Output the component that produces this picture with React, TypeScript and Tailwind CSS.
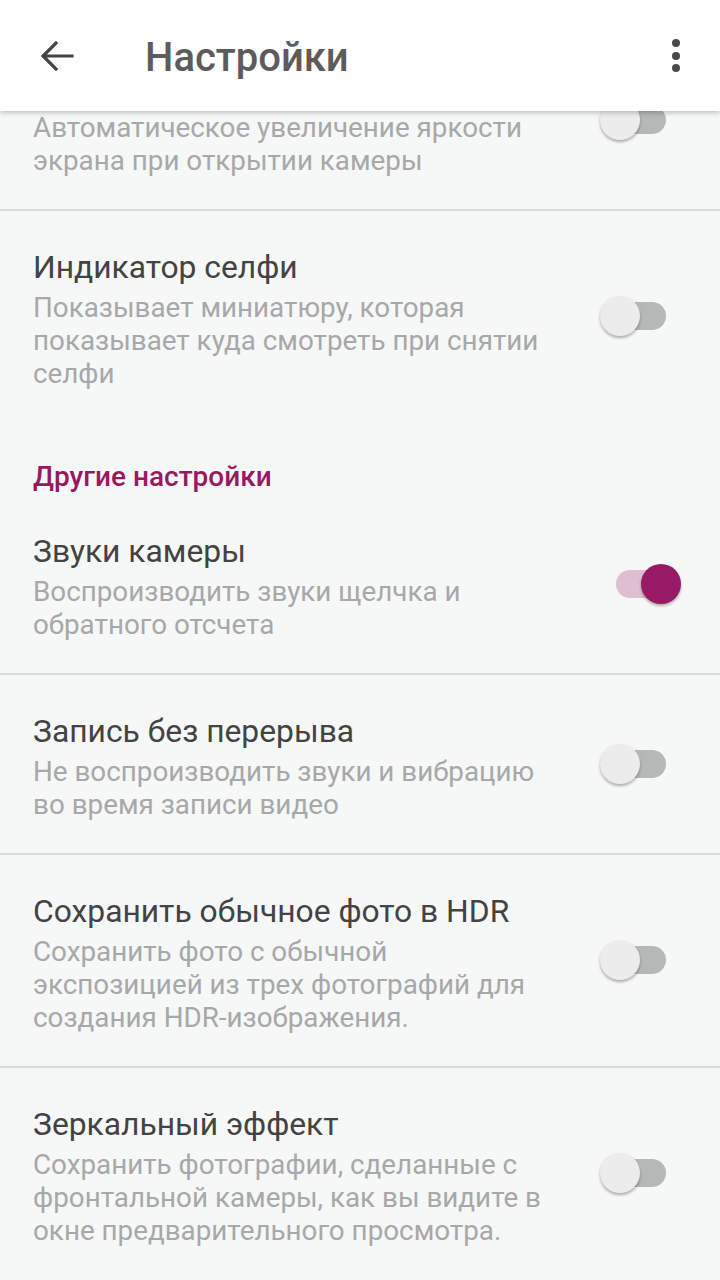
import React from 'react';

type Item = {
  title?: string;
  summary: string[];
  on?: boolean;
  divider?: boolean;
};

const Toggle: React.FC<{ on?: boolean }> = ({ on }) => (
  <div className="relative w-[82px] h-[40px] shrink-0 -mt-[5px]">
    <div className={`absolute left-[16px] top-[6px] w-[50px] h-[28px] rounded-full ${on ? 'bg-[#dfbdd2]' : 'bg-[#b6b8b7]'}`} />
    <div
      className={`absolute top-0 w-[40px] h-[40px] rounded-full shadow-[0_2px_3px_rgba(0,0,0,0.3)] ${on ? 'left-[41px] bg-[#981a64]' : 'left-0 bg-[#ececec]'}`}
    />
  </div>
);

const Row: React.FC<{ item: Item }> = ({ item }) => (
  <>
    <div className="flex items-center pl-[33px] pr-[38px] pt-[36px] pb-[32px]">
      <div className="flex-1 min-w-0">
        <div className="h-[40px] text-[31.8px] leading-[40px] text-[#434343]">{item.title}</div>
        <div className="mt-[4px] text-[27.8px] leading-[33px] text-[#a7a8a9]">
          {item.summary.map(s => (
            <div key={s} className="whitespace-nowrap">{s}</div>
          ))}
        </div>
      </div>
      <Toggle on={item.on} />
    </div>
    {item.divider && <div className="h-[2px] bg-[#d9dada]" />}
  </>
);

const camera: Item[] = [
  {
    summary: ['Автоматическое увеличение яркости', 'экрана при открытии камеры'],
    divider: true,
  },
  {
    title: 'Индикатор селфи',
    summary: ['Показывает миниатюру, которая', 'показывает куда смотреть при снятии', 'селфи'],
  },
];

const other: Item[] = [
  {
    title: 'Звуки камеры',
    summary: ['Воспроизводить звуки щелчка и', 'обратного отсчета'],
    on: true,
    divider: true,
  },
  {
    title: 'Запись без перерыва',
    summary: ['Не воспроизводить звуки и вибрацию', 'во время записи видео'],
    divider: true,
  },
  {
    title: 'Сохранить обычное фото в HDR',
    summary: ['Сохранить фото с обычной', 'экспозицией из трех фотографий для', 'создания HDR-изображения.'],
    divider: true,
  },
  {
    title: 'Зеркальный эффект',
    summary: ['Сохранить фотографии, сделанные с', 'фронтальной камеры, как вы видите в', 'окне предварительного просмотра.'],
  },
];

export default function App() {
  return (
    <div className="w-[720px] h-[1280px] overflow-hidden bg-[#f6f7f7] flex flex-col font-['Roboto',sans-serif]">
      <header className="relative z-10 h-[111px] shrink-0 bg-white flex items-center shadow-[0_2px_5px_rgba(0,0,0,0.22)]">
        <div className="w-[112px] flex justify-center pl-[1px]">
          <svg width="34" height="32" viewBox="0 0 34 32" fill="none" stroke="#444" strokeWidth="3.2" strokeLinecap="square">
            <path d="M32 16H4M16 3L3 16l13 13" />
          </svg>
        </div>
        <h1 className="ml-[33px] mt-[4px] text-[40px] font-medium text-[#5c5c5c] leading-none">Настройки</h1>
        <div className="ml-auto mr-[40px] flex flex-col gap-[4.5px] items-center">
          <span className="w-[8px] h-[8px] rounded-full bg-[#4a4a4a]" />
          <span className="w-[8px] h-[8px] rounded-full bg-[#4a4a4a]" />
          <span className="w-[8px] h-[8px] rounded-full bg-[#4a4a4a]" />
        </div>
      </header>
      <div className="flex-1 overflow-hidden">
        <div className="-mt-[80px]">
          {camera.map(i => (
            <Row key={i.summary[0]} item={i} />
          ))}
          <div className="pl-[33px] pt-[40px] pb-[3px] text-[28px] leading-[30px] font-medium text-[#98195f]">
            Другие настройки
          </div>
          {other.map(i => (
            <Row key={i.summary[0]} item={i} />
          ))}
        </div>
      </div>
    </div>
  );
}
